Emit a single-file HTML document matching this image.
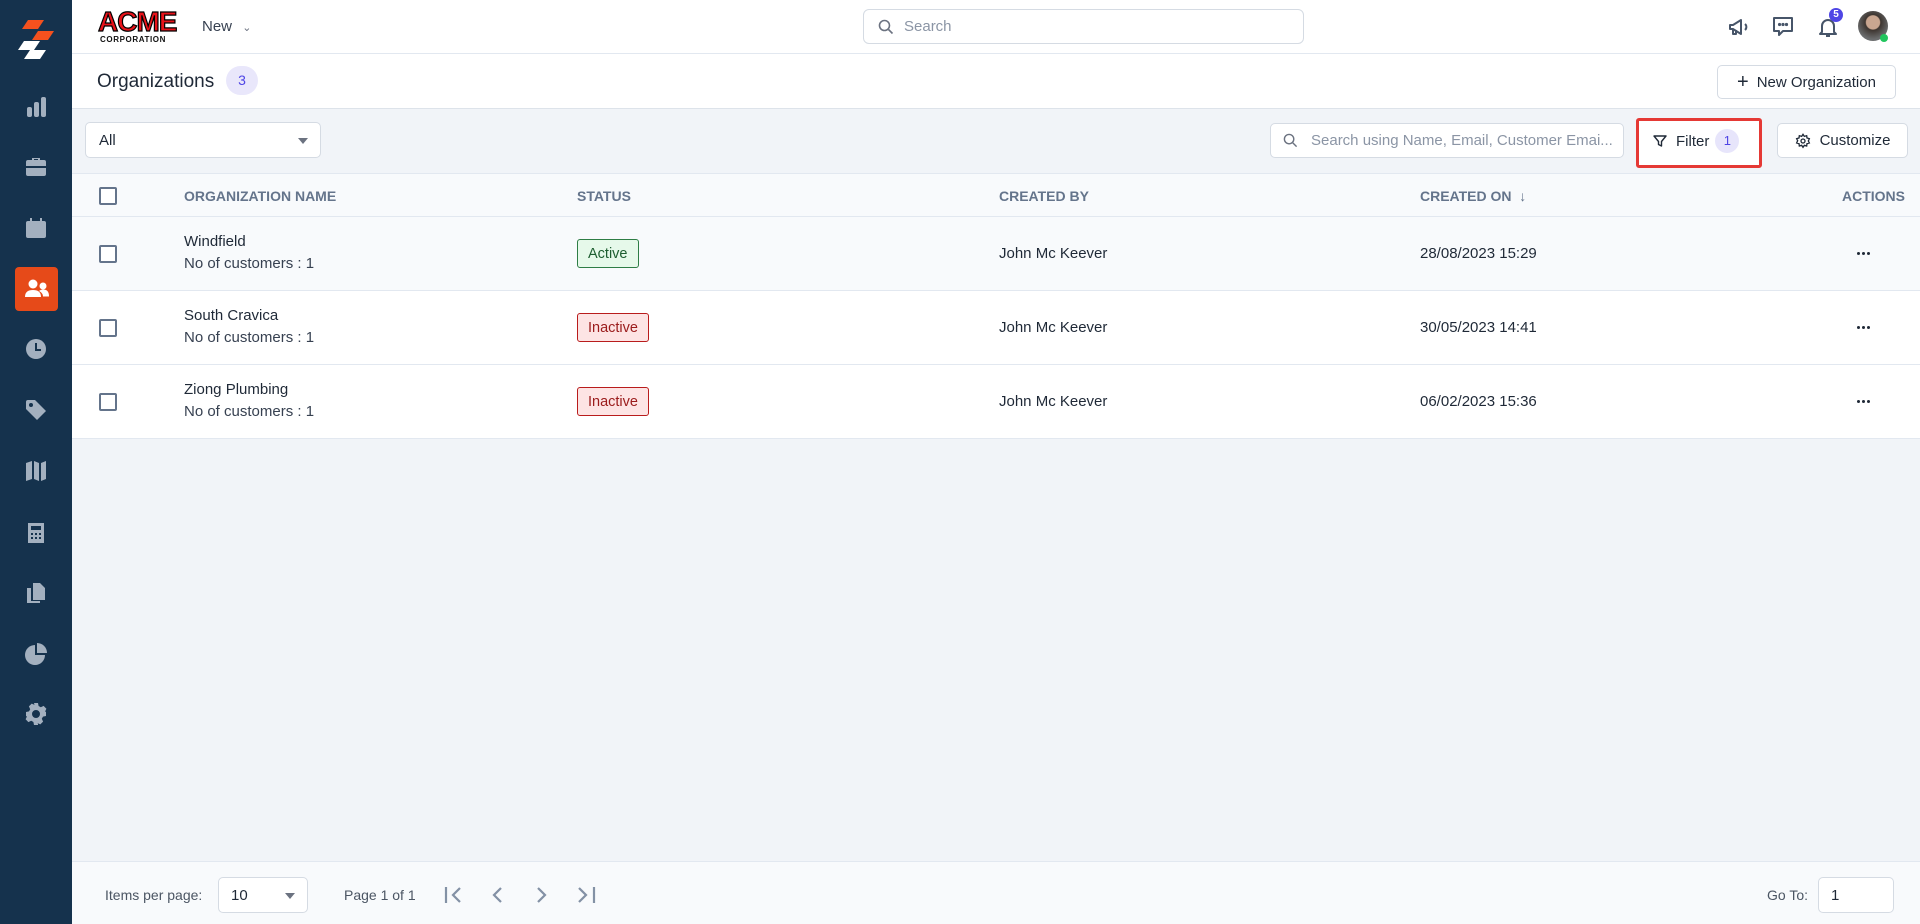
<!DOCTYPE html>
<html><head><meta charset="utf-8"><style>
*{box-sizing:border-box;margin:0;padding:0}
body{width:1920px;height:924px;overflow:hidden;font-family:"Liberation Sans",sans-serif;background:#f1f4f8;position:relative;color:#1f2937;font-size:15px}
.abs{position:absolute}
.sb{left:0;top:0;width:72px;height:924px;background:#15324d}
.ic{position:absolute;left:24px;width:24px;height:24px;fill:#a3b0bf}
.hdr{left:72px;top:0;width:1848px;height:54px;background:#fff;border-bottom:1px solid #e2e8f0}
.tb{left:72px;top:54px;width:1848px;height:55px;background:#fff;border-bottom:1px solid #dde3ea}
.btn{background:#fff;border:1px solid #d5dbe3;border-radius:5px;display:flex;align-items:center;justify-content:center;font-size:15px;color:#1f2937}
.th{left:72px;top:173px;width:1848px;height:44px;background:#f8fafc;border-top:1px solid #e2e8f0;border-bottom:1px solid #e2e8f0;font-size:14px;color:#64748b;font-weight:bold}
.th span{position:absolute;top:14px}
.row{left:72px;width:1848px;height:74px;border-bottom:1px solid #e2e8f0;background:#fff}
.row .t{position:absolute;font-size:15px;color:#1f2937}
.cb{position:absolute;left:27px;width:18px;height:18px;border:2px solid #64748b;border-radius:2px;background:#fff}
.badge{position:absolute;left:505px;top:22px;height:29px;padding:0 10px;border-radius:3px;font-size:14.5px;display:flex;align-items:center}
.act{background:#e6f9ea;border:1px solid #2e7d45;color:#1d5e30}
.ina{background:#fde4e4;border:1px solid #b91c1c;color:#9b1c1c}
.dots{position:absolute;left:1785px;top:35px;width:14px;height:3px}
.dots i{position:absolute;top:0;width:3px;height:3px;border-radius:2px;background:#1f2937}
</style></head><body>
<div class="abs sb">
 <svg class="abs" style="left:16px;top:20px" width="40" height="40" viewBox="0 0 40 40"><polygon points="12,0 28,0 22,9 6,9" fill="#f4511e"/><polygon points="22,11 38,11 32,20 16,20" fill="#f4511e"/><polygon points="8,21 24,21 18,30 2,30" fill="#fff"/><polygon points="14,30 30,30 24,39 8,39" fill="#fff"/></svg>
 <svg class="ic" style="top:95px" viewBox="0 0 24 24"><rect x="3" y="12" width="5" height="10" rx="2"/><rect x="10" y="7" width="5" height="15" rx="2"/><rect x="17" y="2" width="5" height="20" rx="2"/></svg>
 <svg class="ic" style="top:155px" viewBox="0 0 24 24"><path d="M8 5V3h8v2h4a2 2 0 0 1 2 2v4H2V7a2 2 0 0 1 2-2zm2 0h4V4h-4zM2 13h20v6a2 2 0 0 1-2 2H4a2 2 0 0 1-2-2z"/></svg>
 <svg class="ic" style="top:216px" viewBox="0 0 24 24"><path d="M6 2h2v3h8V2h2v3h2a2 2 0 0 1 2 2v13a2 2 0 0 1-2 2H4a2 2 0 0 1-2-2V7a2 2 0 0 1 2-2h2z"/></svg>
 <div class="abs" style="left:15px;top:267px;width:43px;height:44px;background:#e64a19;border-radius:4px"></div>
 <svg class="abs" style="left:24px;top:278px" width="26" height="22" viewBox="0 0 26 22" fill="#fff"><circle cx="9" cy="6" r="4.5"/><path d="M1 19c0-5 3-7 8-7s8 2 8 7z"/><circle cx="19" cy="8" r="3.5"/><path d="M15 13c1-1 3-1.5 4-1.5 4 0 6 2 6 7h-6c0-2-1-4-4-5.5z"/></svg>
 <svg class="ic" style="top:337px" viewBox="0 0 24 24"><circle cx="12" cy="12" r="10"/><path d="M11 6h2v6h4v2h-6z" fill="#15324d"/></svg>
 <svg class="ic" style="top:398px" viewBox="0 0 24 24"><path d="M2 4a2 2 0 0 1 2-2h7l11 11-9 9L2 11zm5 1a2 2 0 1 0 0 4 2 2 0 0 0 0-4z"/></svg>
 <svg class="ic" style="top:458px" viewBox="0 0 24 24"><path d="M2 5l6-2v18l-6 2zM10 3l5 2v18l-5-2zM17 5l5-2v18l-5 2z"/></svg>
 <svg class="ic" style="top:521px" viewBox="0 0 24 24"><path d="M4 2h16v20H4zm3 3v4h10V5zm0 7v2h2v-2zm4 0v2h2v-2zm4 0v2h2v-2zm-8 4v2h2v-2zm4 0v2h2v-2zm4 0v2h2v-2z"/></svg>
 <svg class="ic" style="top:581px" viewBox="0 0 24 24"><path d="M9 2h7l5 5v12H9zM3 7h4v13h9v2H3z"/></svg>
 <svg class="ic" style="top:642px" viewBox="0 0 24 24"><path d="M11 3v10h10A10 10 0 1 1 11 3zM13 1a10 10 0 0 1 10 10H13z"/></svg>
 <svg class="ic" style="top:702px" viewBox="0 0 24 24"><path d="M10 1h4l.6 3 2.2 1.2 2.8-1.3 2.8 2.8-1.3 2.8L22 10v4l-3 .6-1.2 2.2 1.3 2.8-2.8 2.8-2.8-1.3L14 22v1h-4l-.6-3-2.2-1.2-2.8 1.3-2.8-2.8 1.3-2.8L2 14v-4l3-.6 1.2-2.2-1.3-2.8 2.8-2.8 2.8 1.3zM12 8a4 4 0 1 0 0 8 4 4 0 0 0 0-8z"/></svg>
</div>

<div class="abs hdr"></div>
<div class="abs" style="left:98px;top:9px;width:82px;height:36px">
 <div style="font-family:'Liberation Sans';font-weight:900;font-size:28px;color:#e8131a;letter-spacing:-1px;line-height:26px;-webkit-text-stroke:1.2px #000">ACME</div>
 <div style="font-weight:bold;font-size:8px;letter-spacing:.6px;color:#111;margin-left:2px">CORPORATION</div>
</div>
<div class="abs" style="left:202px;top:18px;font-size:15px;color:#374151">New <span style="font-size:11px;margin-left:6px;color:#6b7280">&#8964;</span></div>
<div class="abs btn" style="left:863px;top:9px;width:441px;height:35px;justify-content:flex-start;padding-left:14px;color:#8b95a5;border-radius:6px">
 <svg width="16" height="16" viewBox="0 0 16 16" fill="none" stroke="#6b7280" stroke-width="1.6"><circle cx="6.5" cy="6.5" r="5"/><path d="M10.5 10.5l4 4"/></svg><span style="margin-left:10px">Search</span></div>
<svg class="abs" style="left:1727px;top:15px" width="24" height="24" viewBox="0 0 24 24" fill="none" stroke="#475569" stroke-width="2" stroke-linejoin="round"><path d="M3 10v4h3l8 5V5L6 10z"/><path d="M6 14v5h3v-4"/><path d="M18 9a4 4 0 0 1 0 6"/></svg>
<svg class="abs" style="left:1771px;top:14px" width="24" height="24" viewBox="0 0 24 24" fill="none" stroke="#475569" stroke-width="2" stroke-linejoin="round"><path d="M3 4h18v13h-9l-4 4v-4H3z"/><circle cx="8.5" cy="10.5" r=".6" fill="#475569"/><circle cx="12" cy="10.5" r=".6" fill="#475569"/><circle cx="15.5" cy="10.5" r=".6" fill="#475569"/></svg>
<svg class="abs" style="left:1816px;top:15px" width="24" height="24" viewBox="0 0 24 24" fill="none" stroke="#475569" stroke-width="2" stroke-linejoin="round"><path d="M6 17V11a6 6 0 0 1 12 0v6l2 2H4z"/><path d="M10 21h4"/></svg>
<div class="abs" style="left:1829px;top:8px;width:14px;height:14px;border-radius:7px;background:#4f46e5;color:#fff;font-size:10px;font-weight:bold;text-align:center;line-height:14px">5</div>
<div class="abs" style="left:1858px;top:11px;width:30px;height:30px;border-radius:15px;background:radial-gradient(circle at 50% 38%,#c9a690 0 28%,#3d3530 32%,#6b6d6e 70%)"></div>
<div class="abs" style="left:1880px;top:34px;width:8px;height:8px;border-radius:4px;background:#22c55e"></div>

<div class="abs tb"></div>
<div class="abs" style="left:97px;top:71px;font-size:19px;color:#1f2937">Organizations</div>
<div class="abs" style="left:226px;top:66px;width:32px;height:29px;border-radius:15px;background:#e9e7fb;color:#4f46e5;font-size:14px;text-align:center;line-height:29px">3</div>
<div class="abs btn" style="left:1717px;top:65px;width:179px;height:34px"><span style="font-size:20px;margin-right:8px;line-height:18px">+</span>New Organization</div>

<div class="abs btn" style="left:85px;top:122px;width:236px;height:36px;justify-content:flex-start;padding-left:13px">All<span style="position:absolute;right:12px;top:15px;border:5px solid transparent;border-top:6px solid #6b7280"></span></div>
<div class="abs btn" style="left:1270px;top:123px;width:354px;height:35px;justify-content:flex-start;padding-left:12px;color:#8b95a5">
 <svg width="15" height="15" viewBox="0 0 16 16" fill="none" stroke="#6b7280" stroke-width="1.5"><circle cx="6.5" cy="6.5" r="5"/><path d="M10.5 10.5l4 4"/></svg><span style="margin-left:13px">Search using Name, Email, Customer Emai...</span></div>
<div class="abs" style="left:1636px;top:118px;width:126px;height:50px;border:3px solid #e53935;border-radius:3px;background:#fff"></div>
<div class="abs" style="left:1652px;top:129px;display:flex;align-items:center;font-size:15px">
 <svg width="16" height="16" viewBox="0 0 16 16" fill="none" stroke="#1f2937" stroke-width="1.4" stroke-linejoin="round"><path d="M2 3h12L9.5 8.5V13l-3-1.5V8.5z"/></svg><span style="margin-left:8px">Filter</span>
 <span style="margin-left:6px;width:24px;height:24px;border-radius:12px;background:#e7e5fb;color:#4f46e5;font-size:13px;text-align:center;line-height:24px">1</span></div>
<div class="abs btn" style="left:1777px;top:123px;width:131px;height:35px"><svg width="16" height="16" viewBox="0 0 24 24" fill="none" stroke="#1f2937" stroke-width="2"><circle cx="12" cy="12" r="3"/><path d="M12 2l2 3 3.5-1 .5 3.5 3.5 1-1.5 3.5 1.5 3-3.5 1-.5 3.5-3.5-1-2 3-2-3-3.5 1-.5-3.5-3.5-1 1.5-3.5L2.5 8.5 6 7.5 6.5 4 10 5z"/></svg><span style="margin-left:9px">Customize</span></div>

<div class="abs th"><div class="cb" style="top:13px"></div><span style="left:112px">ORGANIZATION NAME</span><span style="left:505px">STATUS</span><span style="left:927px">CREATED BY</span><span style="left:1348px">CREATED ON &nbsp;&#8595;</span><span style="left:1770px">ACTIONS</span></div>

<div class="abs row" style="top:217px;background:#f8fafc"><div class="cb" style="top:28px"></div><div class="t" style="left:112px;top:16px">Windfield</div><div class="t" style="left:112px;top:38px;color:#374151">No of customers : 1</div><div class="badge act">Active</div><div class="t" style="left:927px;top:28px">John Mc Keever</div><div class="t" style="left:1348px;top:28px">28/08/2023 15:29</div><div class="dots"><i style="left:0"></i><i style="left:5px"></i><i style="left:10px"></i></div></div>
<div class="abs row" style="top:291px"><div class="cb" style="top:28px"></div><div class="t" style="left:112px;top:16px">South Cravica</div><div class="t" style="left:112px;top:38px;color:#374151">No of customers : 1</div><div class="badge ina">Inactive</div><div class="t" style="left:927px;top:28px">John Mc Keever</div><div class="t" style="left:1348px;top:28px">30/05/2023 14:41</div><div class="dots"><i style="left:0"></i><i style="left:5px"></i><i style="left:10px"></i></div></div>
<div class="abs row" style="top:365px"><div class="cb" style="top:28px"></div><div class="t" style="left:112px;top:16px">Ziong Plumbing</div><div class="t" style="left:112px;top:38px;color:#374151">No of customers : 1</div><div class="badge ina">Inactive</div><div class="t" style="left:927px;top:28px">John Mc Keever</div><div class="t" style="left:1348px;top:28px">06/02/2023 15:36</div><div class="dots"><i style="left:0"></i><i style="left:5px"></i><i style="left:10px"></i></div></div>

<div class="abs" style="left:72px;top:861px;width:1848px;height:63px;background:#f8fafc;border-top:1px solid #e2e8f0"></div>
<div class="abs" style="left:105px;top:887px;font-size:14px;color:#4b5563">Items per page:</div>
<div class="abs btn" style="left:218px;top:877px;width:90px;height:36px;justify-content:flex-start;padding-left:12px">10<span style="position:absolute;right:12px;top:15px;border:5px solid transparent;border-top:6px solid #6b7280"></span></div>
<div class="abs" style="left:344px;top:887px;font-size:14px;color:#4b5563">Page 1 of 1</div>
<svg class="abs" style="left:444px;top:884px" width="160" height="22" viewBox="0 0 160 22" fill="none" stroke="#8391a5" stroke-width="2.2"><path d="M2 3v16M16 4l-7 7 7 7"/><path d="M57 4l-7 7 7 7"/><path d="M94 4l7 7-7 7"/><path d="M135 4l7 7-7 7M150 3v16"/></svg>
<div class="abs" style="left:1767px;top:887px;font-size:14px;color:#4b5563">Go To:</div>
<div class="abs btn" style="left:1818px;top:877px;width:76px;height:36px;justify-content:flex-start;padding-left:12px">1</div>
</body></html>
